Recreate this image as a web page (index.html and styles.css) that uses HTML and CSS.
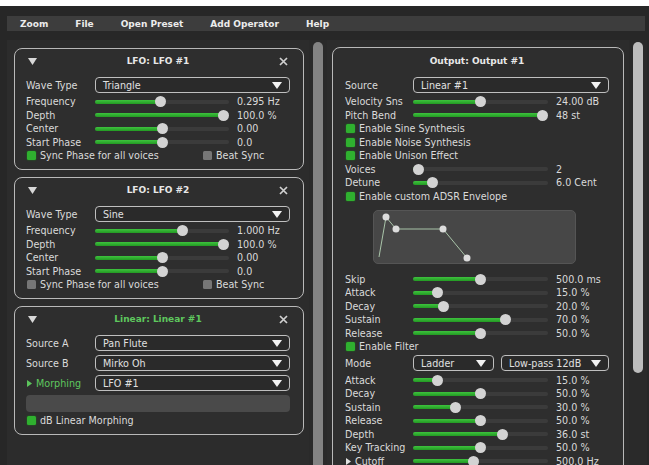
FILE: index.html
```html
<!DOCTYPE html>
<html>
<head>
<meta charset="utf-8">
<link rel="stylesheet" href="styles.css">
</head>
<body>
<div class="topstrip"></div>
<div class="app">
  <nav class="menubar">
    <span>Zoom</span><span>File</span><span>Open Preset</span><span>Add Operator</span><span>Help</span>
  </nav>
  <div class="main">
    <div class="col left">
      <section class="panel">
        <header class="ptitle">
          <svg class="tri" width="9" height="7" viewBox="0 0 9 7"><path d="M0 0H9L4.5 7Z" fill="#d8d8d8"/></svg>
          <span class="ttext">LFO: LFO #1</span>
          <svg class="close" width="9" height="9" viewBox="0 0 9 9"><path d="M1 1L8 8M8 1L1 8" stroke="#d0d0d0" stroke-width="1.7"/></svg>
        </header>
        <div class="ddrow"><span class="lbl">Wave Type</span><div class="dd"><span>Triangle</span><svg width="10" height="7" viewBox="0 0 10 7"><path d="M0 0H10L5 7Z" fill="#f2f2f2"/></svg></div></div>
        <div class="srow"><span class="lbl">Frequency</span><div class="slider" style="--p:0.49"><div class="fill"></div><div class="knob"></div></div><span class="val">0.295 Hz</span></div>
        <div class="srow"><span class="lbl">Depth</span><div class="slider" style="--p:1"><div class="fill"></div><div class="knob"></div></div><span class="val">100.0 %</span></div>
        <div class="srow"><span class="lbl">Center</span><div class="slider" style="--p:0.5"><div class="fill"></div><div class="knob"></div></div><span class="val">0.00</span></div>
        <div class="srow"><span class="lbl">Start Phase</span><div class="slider" style="--p:0.5"><div class="fill"></div><div class="knob"></div></div><span class="val">0.0</span></div>
        <div class="crow"><span class="chk"><i class="box on"></i>Sync Phase for all voices</span><span class="chk"><i class="box off"></i>Beat Sync</span></div>
      </section>

      <section class="panel">
        <header class="ptitle">
          <svg class="tri" width="9" height="7" viewBox="0 0 9 7"><path d="M0 0H9L4.5 7Z" fill="#d8d8d8"/></svg>
          <span class="ttext">LFO: LFO #2</span>
          <svg class="close" width="9" height="9" viewBox="0 0 9 9"><path d="M1 1L8 8M8 1L1 8" stroke="#d0d0d0" stroke-width="1.7"/></svg>
        </header>
        <div class="ddrow"><span class="lbl">Wave Type</span><div class="dd"><span>Sine</span><svg width="10" height="7" viewBox="0 0 10 7"><path d="M0 0H10L5 7Z" fill="#f2f2f2"/></svg></div></div>
        <div class="srow"><span class="lbl">Frequency</span><div class="slider" style="--p:0.665"><div class="fill"></div><div class="knob"></div></div><span class="val">1.000 Hz</span></div>
        <div class="srow"><span class="lbl">Depth</span><div class="slider" style="--p:1"><div class="fill"></div><div class="knob"></div></div><span class="val">100.0 %</span></div>
        <div class="srow"><span class="lbl">Center</span><div class="slider" style="--p:0.5"><div class="fill"></div><div class="knob"></div></div><span class="val">0.00</span></div>
        <div class="srow"><span class="lbl">Start Phase</span><div class="slider" style="--p:0.5"><div class="fill"></div><div class="knob"></div></div><span class="val">0.0</span></div>
        <div class="crow"><span class="chk"><i class="box off"></i>Sync Phase for all voices</span><span class="chk"><i class="box off"></i>Beat Sync</span></div>
      </section>

      <section class="panel">
        <header class="ptitle">
          <svg class="tri" width="9" height="7" viewBox="0 0 9 7"><path d="M0 0H9L4.5 7Z" fill="#d8d8d8"/></svg>
          <span class="ttext green">Linear: Linear #1</span>
          <svg class="close" width="9" height="9" viewBox="0 0 9 9"><path d="M1 1L8 8M8 1L1 8" stroke="#d0d0d0" stroke-width="1.7"/></svg>
        </header>
        <div class="ddrow"><span class="lbl">Source A</span><div class="dd"><span>Pan Flute</span><svg width="10" height="7" viewBox="0 0 10 7"><path d="M0 0H10L5 7Z" fill="#f2f2f2"/></svg></div></div>
        <div class="ddrow gap"><span class="lbl">Source B</span><div class="dd"><span>Mirko Oh</span><svg width="10" height="7" viewBox="0 0 10 7"><path d="M0 0H10L5 7Z" fill="#f2f2f2"/></svg></div></div>
        <div class="ddrow gap"><span class="lbl green"><svg class="mini" width="5" height="7" viewBox="0 0 5 7"><path d="M0 0L5 3.5L0 7Z" fill="#5cc45c"/></svg>Morphing</span><div class="dd"><span>LFO #1</span><svg width="10" height="7" viewBox="0 0 10 7"><path d="M0 0H10L5 7Z" fill="#f2f2f2"/></svg></div></div>
        <div class="morphbar"></div>
        <div class="crow single"><span class="chk"><i class="box on"></i>dB Linear Morphing</span></div>
      </section>
    </div>
    <div class="scroll"><div class="thumb dim"></div></div>

    <div class="col right">
      <section class="panel wide">
        <header class="ptitle tall"><span></span><span class="ttext">Output: Output #1</span><span></span></header>
        <div class="ddrow"><span class="lbl">Source</span><div class="dd"><span>Linear #1</span><svg width="10" height="7" viewBox="0 0 10 7"><path d="M0 0H10L5 7Z" fill="#f2f2f2"/></svg></div></div>
        <div class="srow"><span class="lbl">Velocity Sns</span><div class="slider" style="--p:0.5"><div class="fill"></div><div class="knob"></div></div><span class="val">24.00 dB</span></div>
        <div class="srow"><span class="lbl">Pitch Bend</span><div class="slider" style="--p:1"><div class="fill"></div><div class="knob"></div></div><span class="val">48 st</span></div>
        <div class="crow single"><span class="chk"><i class="box on"></i>Enable Sine Synthesis</span></div>
        <div class="crow single"><span class="chk"><i class="box on"></i>Enable Noise Synthesis</span></div>
        <div class="crow single"><span class="chk"><i class="box on"></i>Enable Unison Effect</span></div>
        <div class="srow"><span class="lbl">Voices</span><div class="slider" style="--p:0"><div class="fill"></div><div class="knob"></div></div><span class="val">2</span></div>
        <div class="srow"><span class="lbl">Detune</span><div class="slider" style="--p:0.11"><div class="fill"></div><div class="knob"></div></div><span class="val">6.0 Cent</span></div>
        <div class="crow single"><span class="chk"><i class="box on"></i>Enable custom ADSR Envelope</span></div>
        <div class="envelope">
          <svg width="203" height="54" viewBox="0 0 203 54">
            <polyline points="6,47 13,7 23,19 70,19 94,48" fill="none" stroke="#a9c4a9" stroke-width="1"/>
            <circle cx="13" cy="7" r="3.5" fill="#dcdcdc"/>
            <circle cx="23" cy="19" r="3.5" fill="#dcdcdc"/>
            <circle cx="70" cy="19" r="3.5" fill="#dcdcdc"/>
            <circle cx="94" cy="48" r="3.5" fill="#dcdcdc"/>
          </svg>
        </div>
        <div class="srow"><span class="lbl">Skip</span><div class="slider" style="--p:0.5"><div class="fill"></div><div class="knob"></div></div><span class="val">500.0 ms</span></div>
        <div class="srow"><span class="lbl">Attack</span><div class="slider" style="--p:0.15"><div class="fill"></div><div class="knob"></div></div><span class="val">15.0 %</span></div>
        <div class="srow"><span class="lbl">Decay</span><div class="slider" style="--p:0.2"><div class="fill"></div><div class="knob"></div></div><span class="val">20.0 %</span></div>
        <div class="srow"><span class="lbl">Sustain</span><div class="slider" style="--p:0.7"><div class="fill"></div><div class="knob"></div></div><span class="val">70.0 %</span></div>
        <div class="srow"><span class="lbl">Release</span><div class="slider" style="--p:0.5"><div class="fill"></div><div class="knob"></div></div><span class="val">50.0 %</span></div>
        <div class="crow single"><span class="chk"><i class="box on"></i>Enable Filter</span></div>
        <div class="moderow"><span class="lbl">Mode</span>
          <div class="dd"><span>Ladder</span><svg width="10" height="7" viewBox="0 0 10 7"><path d="M0 0H10L5 7Z" fill="#f2f2f2"/></svg></div>
          <div class="dd"><span>Low-pass 12dB</span><svg width="10" height="7" viewBox="0 0 10 7"><path d="M0 0H10L5 7Z" fill="#f2f2f2"/></svg></div>
        </div>
        <div class="srow"><span class="lbl">Attack</span><div class="slider" style="--p:0.15"><div class="fill"></div><div class="knob"></div></div><span class="val">15.0 %</span></div>
        <div class="srow"><span class="lbl">Decay</span><div class="slider" style="--p:0.5"><div class="fill"></div><div class="knob"></div></div><span class="val">50.0 %</span></div>
        <div class="srow"><span class="lbl">Sustain</span><div class="slider" style="--p:0.3"><div class="fill"></div><div class="knob"></div></div><span class="val">30.0 %</span></div>
        <div class="srow"><span class="lbl">Release</span><div class="slider" style="--p:0.5"><div class="fill"></div><div class="knob"></div></div><span class="val">50.0 %</span></div>
        <div class="srow"><span class="lbl">Depth</span><div class="slider" style="--p:0.68"><div class="fill"></div><div class="knob"></div></div><span class="val">36.0 st</span></div>
        <div class="srow"><span class="lbl">Key Tracking</span><div class="slider" style="--p:0.5"><div class="fill"></div><div class="knob"></div></div><span class="val">50.0 %</span></div>
        <div class="srow"><span class="lbl"><svg class="mini" width="5" height="7" viewBox="0 0 5 7"><path d="M0 0L5 3.5L0 7Z" fill="#e0e0e0"/></svg>Cutoff</span><div class="slider" style="--p:0.44"><div class="fill"></div><div class="knob"></div></div><span class="val">500.0 Hz</span></div>
      </section>
    </div>
    <div class="scroll"><div class="thumb bright"></div></div>
  </div>
</div>
</body>
</html>
```

FILE: styles.css
```css
html, body {
  margin: 0;
  height: 465px;
  overflow: hidden;
  background: #ffffff;
}
body {
  font-family: "DejaVu Sans", sans-serif;
  font-size: 9.6px;
  color: #dadada;
}
.topstrip {
  height: 6px;
  background: #ffffff;
}
.app {
  height: 459px;
  background: #272727;
  display: flex;
  flex-direction: column;
  overflow: hidden;
}
.menubar {
  margin: 10px 4px 0 7px;
  height: 15px;
  background: #3d3d3d;
  display: flex;
  align-items: center;
  gap: 27px;
  padding-left: 13px;
  font-weight: bold;
  font-size: 9px;
  color: #ececec;
}
.main {
  display: flex;
  margin-top: 9px;
  padding-left: 7px;
  flex: 1;
  min-height: 0;
}
.col {
  width: 302px;
  box-sizing: border-box;
  background: #2c2c2c;
  overflow: hidden;
}
.col.left {
  padding: 8px 5px 0 7px;
}
.col.right {
  padding: 7px 5px 0 5px;
}
.scroll {
  width: 18px;
  box-sizing: border-box;
  padding-top: 2px;
  display: flex;
  justify-content: center;
  align-items: flex-start;
  background: #2a2a2a;
}
.thumb {
  width: 10px;
}
.thumb.dim {
  height: 100%;
  background: #838383;
  border-radius: 5px 5px 0 0;
}
.thumb.bright {
  height: 331px;
  background: #bdbdbd;
  border-radius: 5px;
}
.panel {
  border: 1px solid #b9b9b9;
  border-radius: 8px;
  padding: 0 13px 6.5px 11px;
  margin-bottom: 7px;
  background: #2e2e2e;
}
.panel.wide {
  padding: 0 14px 6px 12px;
}
.ptitle {
  height: 24px;
  display: grid;
  grid-template-columns: 1fr auto 1fr;
  align-items: center;
}
.ptitle.tall {
  height: 25px;
}
.ttext {
  font-weight: bold;
  font-size: 9px;
  color: #e8e8e8;
}
.ttext.green {
  color: #5ec85e;
}
.tri {
  margin-left: 2px;
}
.close {
  justify-self: end;
  margin-right: 2px;
}
.lbl {
  white-space: nowrap;
  display: flex;
  align-items: center;
}
.lbl.green {
  color: #5ec85e;
}
.mini {
  margin: 0 4px 0 1px;
}
.ddrow {
  display: grid;
  grid-template-columns: 69px 1fr;
  align-items: center;
  margin-top: 4px;
  margin-bottom: 2px;
}
.ddrow.gap {
  margin-top: 4px;
}
.wide .ddrow {
  grid-template-columns: 68px 1fr;
}
.dd {
  height: 16px;
  box-sizing: border-box;
  border: 1px solid #bfbfbf;
  border-radius: 4px;
  background: #2a2a2a;
  display: flex;
  align-items: center;
  justify-content: space-between;
  padding: 0 7px;
  color: #e0e0e0;
}
.srow {
  height: 13.5px;
  display: grid;
  grid-template-columns: 69px 134px 1fr;
  align-items: center;
}
.wide .srow {
  grid-template-columns: 68px 135px 1fr;
}
.val {
  padding-left: 8px;
  white-space: nowrap;
}
.slider {
  position: relative;
  height: 4px;
  border-radius: 2px;
  background: #3b3b3b;
}
.fill {
  height: 100%;
  border-radius: 2px;
  width: calc(5px + var(--p) * (100% - 10px));
  background: linear-gradient(#3ec23e, #239a23);
}
.knob {
  position: absolute;
  top: -3.5px;
  left: calc(var(--p) * (100% - 11px));
  width: 11px;
  height: 11px;
  border-radius: 50%;
  background: #d3d3d3;
}
.crow {
  height: 13.5px;
  display: grid;
  grid-template-columns: 176px 1fr;
  align-items: center;
}
.crow.single {
  grid-template-columns: 1fr;
}
.chk {
  display: flex;
  align-items: center;
  white-space: nowrap;
}
.box {
  width: 9px;
  height: 9px;
  border-radius: 1.5px;
  margin: 0 4px 0 1px;
}
.box.on {
  background: #2fb02f;
  box-shadow: 0 0 2px #1d7a1d;
}
.box.off {
  background: #767676;
}
.morphbar {
  margin-top: 4px;
  height: 17px;
  border-radius: 4px;
  background: #4a4a4a;
  margin-bottom: 2px;
}
.envelope {
  margin: 7px 0 8.25px 28px;
  width: 203px;
  height: 54px;
  box-sizing: border-box;
  background: #474747;
  border: 1px solid #555555;
  border-radius: 5px;
  overflow: hidden;
}
.envelope svg {
  display: block;
  margin: -1px 0 0 -1px;
}
.moderow {
  display: grid;
  grid-template-columns: 61px 81px 108px;
  column-gap: 7px;
  align-items: center;
  margin: 2px 0;
}
```
